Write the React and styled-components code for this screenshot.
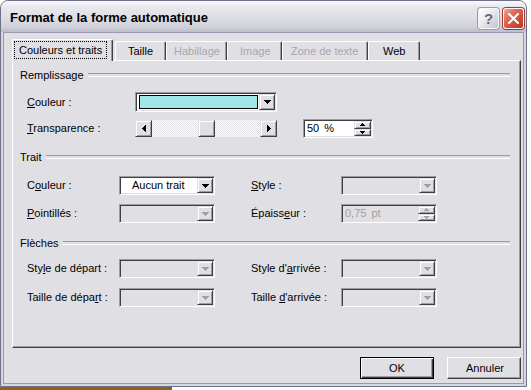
import React from 'react';
import styled, { createGlobalStyle } from 'styled-components';

const FACE = '#e0dfe3';
const SHADOW = '#9d9da1';
const DARK = '#404040';

const Global = createGlobalStyle`
  html, body { margin: 0; padding: 0; background: #fff; }
  body {
    font-family: "Liberation Sans", Arial, sans-serif;
    font-size: 11px;
    line-height: 13px;
    font-weight: normal;
    color: #000;
  }
  * { box-sizing: border-box; }
`;

const Page = styled.div`
  width: 531px;
  height: 390px;
  display: flex;
  flex-direction: column;
  overflow: hidden;
`;

const Window = styled.div`
  width: 527px;
  height: 387px;
  flex: none;
  border: 1px solid #70708a;
  border-radius: 8px 8px 0 0;
  background: #d6d6e0;
  display: flex;
  flex-direction: column;
  overflow: hidden;
`;

const TitleBar = styled.div`
  height: 31px;
  flex: none;
  display: flex;
  align-items: center;
  gap: 2px;
  padding: 3px 1px 0 9px;
  background: linear-gradient(#fafafc 0%, #e9e9ef 18%, #dddde5 55%, #d0d0da 85%, #bcbccb 100%);
`;

const Title = styled.div`
  flex: 1;
  font-weight: bold;
  font-size: 13px;
  line-height: 16px;
  color: #000;
  white-space: nowrap;
`;

const CaptionButton = styled.div`
  width: 21px;
  height: 21px;
  border-radius: 3px;
  display: flex;
  align-items: center;
  justify-content: center;
  border: 1px solid ${p => (p.$close ? '#f4f4f4' : '#f6f6f8')};
  box-shadow: 0 0 0 1px ${p => (p.$close ? '#a03a30' : '#9a9ab0')};
  background: ${p =>
    p.$close
      ? 'linear-gradient(135deg, #f0a898 0%, #e06a58 35%, #cc4a3a 70%, #b8382a 100%)'
      : 'linear-gradient(135deg, #ffffff 0%, #ececf2 40%, #d4d4de 75%, #c4c4d2 100%)'};
  font-weight: bold;
  font-size: 15px;
  line-height: 17px;
  color: #686880;
  margin-right: ${p => (p.$close ? '1px' : '2px')};
`;

const Frame = styled.div`
  flex: 1;
  display: flex;
  padding: 0 2px 2px 2px;
`;

const Client = styled.div`
  flex: 1;
  border: 1px solid #9a9aae;
  background: ${FACE};
  padding: 6px 2px 4px 8px;
  display: flex;
  flex-direction: column;
`;

const TabStrip = styled.div`
  height: 21px;
  display: flex;
  align-items: flex-end;
  flex: none;
`;

const Tab = styled.div`
  width: ${p => p.$w}px;
  height: ${p => (p.$active ? 22 : 19)}px;
  margin-bottom: ${p => (p.$active ? -1 : 0)}px;
  margin-right: ${p => (p.$active ? 2 : 0)}px;
  position: relative;
  z-index: ${p => (p.$active ? 1 : 0)};
  background: ${FACE};
  border-top: 1px solid #fff;
  border-left: 1px solid #fff;
  border-right: 1px solid ${DARK};
  box-shadow: inset -1px 0 ${SHADOW};
  border-radius: 2px 2px 0 0;
  display: flex;
  justify-content: flex-start;
  align-items: ${p => (p.$active ? 'flex-start' : 'center')};
  padding-top: ${p => (p.$active ? 2 : 0)}px;
  padding-left: ${p => p.$pad}px;
  line-height: 14px;
  color: ${p => (p.$disabled ? '#a8a8ac' : '#000')};
  white-space: nowrap;
`;

const FocusText = styled.span`
  outline: 1px dotted #000;
  outline-offset: 0;
  padding: 1px 4px;
  line-height: 14px;
`;

const Panel = styled.div`
  height: 288px;
  flex: none;
  border: 1px solid;
  border-color: #fff ${DARK} ${DARK} #fff;
  box-shadow: inset -1px -1px ${SHADOW};
  padding: 7px 10px 0 7px;
  display: flex;
  flex-direction: column;
`;

const GroupHeader = styled.div`
  height: 14px;
  line-height: 14px;
  margin-top: ${p => p.$mt || 0}px;
  display: flex;
  align-items: center;
  gap: 4px;
  &::after {
    content: '';
    flex: 1;
    height: 2px;
    border-top: 1px solid ${SHADOW};
    border-bottom: 1px solid #fff;
    margin-top: -1px;
  }
`;

const Row = styled.div`
  display: grid;
  grid-template-columns: ${p => p.$cols};
  align-items: center;
  height: ${p => p.$h || 19}px;
  margin-top: ${p => p.$mt}px;
  margin-left: 7px;
`;

const Label = styled.span`
  white-space: nowrap;
  line-height: 13px;
`;

const Sunken = styled.div`
  width: ${p => p.$w}px;
  height: ${p => p.$h || 19}px;
  border: 1px solid;
  border-color: ${SHADOW} #fff #fff ${SHADOW};
  box-shadow: inset 1px 1px ${DARK}, inset -1px -1px ${FACE};
  background: ${p => (p.$disabled ? FACE : '#fff')};
  padding: 1px;
  display: flex;
`;

const FieldText = styled.div`
  flex: 1;
  display: flex;
  align-items: center;
  justify-content: flex-start;
  padding-left: ${p => p.$pad ?? 2}px;
  line-height: 13px;
  color: ${p => (p.$disabled ? '#a0a0a0' : '#000')};
  white-space: nowrap;
  word-spacing: ${p => p.$ws ?? 2}px;
`;

const Swatch = styled.div`
  flex: 1;
  margin: 1px 1px 1px 2px;
  border: 1px solid #000;
  background: ${p => p.$color};
`;

const Raised = styled.div`
  width: ${p => p.$w || 16}px;
  height: ${p => (p.$h ? `${p.$h}px` : 'auto')};
  flex: none;
  background: ${FACE};
  border: 1px solid;
  border-color: ${FACE} ${DARK} ${DARK} ${FACE};
  box-shadow: inset 1px 1px #fff, inset -1px -1px ${SHADOW};
  display: flex;
  align-items: center;
  justify-content: center;
`;

const SpinColumn = styled.div`
  width: 17px;
  flex: none;
  display: flex;
  flex-direction: column;
  & > * { flex: 1; }
`;

const ScrollBar = styled.div`
  width: 142px;
  height: 17px;
  display: flex;
`;

const Track = styled.div`
  flex: 1;
  display: flex;
  justify-content: center;
  background: repeating-conic-gradient(#ffffff 0 25%, ${FACE} 0 50%) 0 0 / 2px 2px;
`;

const Buttons = styled.div`
  margin-top: 9px;
  display: flex;
  justify-content: flex-end;
  gap: 13px;
`;

const PushButton = styled.div`
  width: 74px;
  height: 22px;
  display: flex;
  align-items: center;
  justify-content: flex-start;
  padding-left: ${p => p.$pad}px;
  line-height: 14px;
  background: ${FACE};
  border: 1px solid;
  border-color: ${p => (p.$default ? '#000' : `#fff ${DARK} ${DARK} #fff`)};
  box-shadow: ${p =>
    p.$default
      ? `inset 1px 1px #fff, inset -1px -1px ${DARK}, inset -2px -2px ${SHADOW}`
      : `inset -1px -1px ${SHADOW}`};
`;

const BottomStrip = styled.div`
  height: 3px;
  display: flex;
`;

const Brown = styled.div`
  width: 172px;
  background: #8c6416;
`;

const Px = ({ d, w, h, color = '#000' }) => (
  <svg width={w} height={h} viewBox={`0 0 ${w} ${h}`} shapeRendering="crispEdges">
    <path d={d} fill={color} />
  </svg>
);

const DOWN7 = 'M0 0h7v1h-1v1h-1v1h-1v1h-1v-1h-1v-1h-1v-1h-1z';
const UP5 = 'M2 0h1v1h1v1h1v1H0V2h1V1h1z';
const DOWN5 = 'M0 0h5v1h-1v1h-1v1h-1v-1h-1v-1h-1z';
const LEFT4 = 'M3 0h1v7h-1v-1h-1v-1h-1v-1h-1v-1h1v-1h1v-1h1z';
const RIGHT4 = 'M0 0h1v1h1v1h1v1h1v1h-1v1h-1v1h-1v1h-1z';

const DropButton = ({ disabled }) => (
  <Raised $w={16}>
    <Px d={DOWN7} w={7} h={4} color={disabled ? '#a0a0a0' : '#000'} />
  </Raised>
);

const Combo = ({ w, h, disabled, children }) => (
  <Sunken $w={w} $h={h} $disabled={disabled}>
    {children || <FieldText />}
    <DropButton disabled={disabled} />
  </Sunken>
);

const Spin = ({ w, value, disabled }) => (
  <Sunken $w={w} $disabled={disabled}>
    <FieldText $disabled={disabled}>{value}</FieldText>
    <SpinColumn>
      <Raised $w={17}>
        <Px d={UP5} w={5} h={3} color={disabled ? '#a0a0a0' : '#000'} />
      </Raised>
      <Raised $w={17}>
        <Px d={DOWN5} w={5} h={3} color={disabled ? '#a0a0a0' : '#000'} />
      </Raised>
    </SpinColumn>
  </Sunken>
);

const tabs = [
  { label: 'Couleurs et traits', w: 101, pad: 2, active: true },
  { label: 'Taille', w: 51, pad: 12 },
  { label: 'Habillage', w: 61, pad: 7, disabled: true },
  { label: 'Image', w: 55, pad: 12, disabled: true },
  { label: 'Zone de texte', w: 86, pad: 8, disabled: true },
  { label: 'Web', w: 52, pad: 14 },
];

const PAIR = '92px 132px 90px 96px';

export default function App() {
  return (
    <Page>
      <Global />
      <Window>
        <TitleBar>
          <Title>Format de la forme automatique</Title>
          <CaptionButton>?</CaptionButton>
          <CaptionButton $close>
            <svg width="11" height="11" viewBox="0 0 11 11">
              <path d="M1 1L10 10M10 1L1 10" stroke="#fff" strokeWidth="2" strokeLinecap="square" />
            </svg>
          </CaptionButton>
        </TitleBar>
        <Frame>
          <Client>
            <TabStrip>
              {tabs.map(t => (
                <Tab key={t.label} $w={t.w} $pad={t.pad} $active={t.active} $disabled={t.disabled}>
                  {t.active ? <FocusText>{t.label}</FocusText> : t.label}
                </Tab>
              ))}
            </TabStrip>
            <Panel>
              <GroupHeader>Remplissage</GroupHeader>
              <Row $cols="108px auto" $h={20} $mt={10}>
                <Label><u>C</u>ouleur :</Label>
                <Combo w={142} h={20}>
                  <Swatch $color="#a0e8e6" />
                </Combo>
              </Row>
              <Row $cols="108px 168px auto" $mt={7}>
                <Label><u>T</u>ransparence :</Label>
                <ScrollBar>
                  <Raised $w={17} $h={17}>
                    <Px d={LEFT4} w={4} h={7} />
                  </Raised>
                  <Track>
                    <Raised $w={17} $h={17} />
                  </Track>
                  <Raised $w={17} $h={17}>
                    <Px d={RIGHT4} w={4} h={7} />
                  </Raised>
                </ScrollBar>
                <Spin w={70} value="50 %" />
              </Row>

              <GroupHeader $mt={12}>Trait</GroupHeader>
              <Row $cols={PAIR} $mt={12}>
                <Label>C<u>o</u>uleur :</Label>
                <Combo w={96}>
                  <FieldText $pad={11} $ws={0}>Aucun trait</FieldText>
                </Combo>
                <Label><u>S</u>tyle :</Label>
                <Combo w={96} disabled />
              </Row>
              <Row $cols={PAIR} $mt={9}>
                <Label><u>P</u>ointillés :</Label>
                <Combo w={96} disabled />
                <Label>Épaiss<u>e</u>ur :</Label>
                <Spin w={96} value="0,75 pt" disabled />
              </Row>

              <GroupHeader $mt={13}>Flèches</GroupHeader>
              <Row $cols={PAIR} $mt={9}>
                <Label>Sty<u>l</u>e de départ :</Label>
                <Combo w={96} disabled />
                <Label>Style d'<u>a</u>rrivée :</Label>
                <Combo w={96} disabled />
              </Row>
              <Row $cols={PAIR} $mt={10}>
                <Label>Taille de dépa<u>r</u>t :</Label>
                <Combo w={96} disabled />
                <Label>Taille <u>d</u>'arrivée :</Label>
                <Combo w={96} disabled />
              </Row>
            </Panel>
            <Buttons>
              <PushButton $default $pad={28}>OK</PushButton>
              <PushButton $pad={18}>Annuler</PushButton>
            </Buttons>
          </Client>
        </Frame>
      </Window>
      <BottomStrip>
        <Brown />
      </BottomStrip>
    </Page>
  );
}
